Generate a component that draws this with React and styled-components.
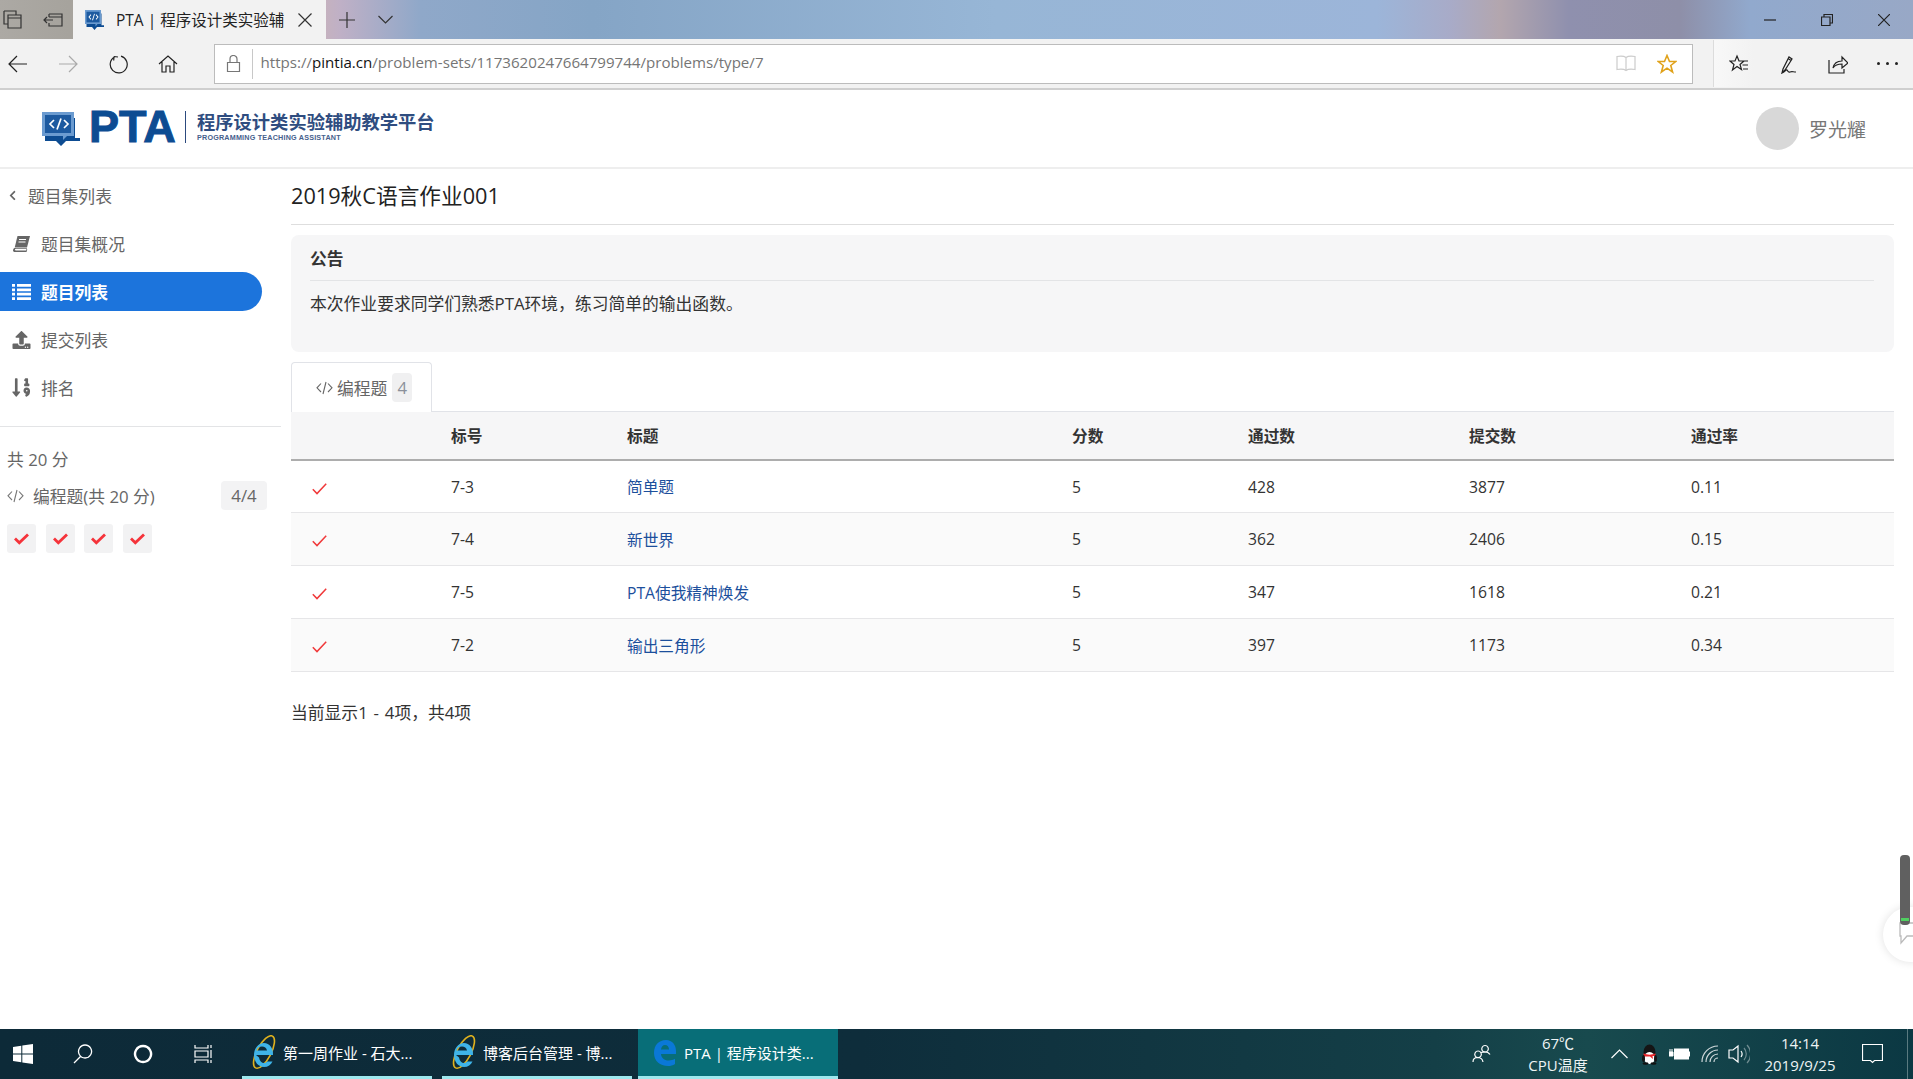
import React from "react"
import styled, { createGlobalStyle } from "styled-components"
import { FaUpload, FaSortNumericDown, FaChevronLeft } from "react-icons/fa"

const GlobalStyle = createGlobalStyle`
    html, body {
        margin: 0;
        padding: 0;
        height: 100%;
        overflow: hidden;
        background: #fff;
    }
    body {
        font-family: "Open Sans", "Noto Sans CJK SC", sans-serif;
        color: #333;
    }
    * { box-sizing: border-box; }
`

const problems = [
    { id: "7-3", title: "简单题", score: 5, pass: 428, submit: 3877, rate: "0.11" },
    { id: "7-4", title: "新世界", score: 5, pass: 362, submit: 2406, rate: "0.15" },
    { id: "7-5", title: "PTA使我精神焕发", score: 5, pass: 347, submit: 1618, rate: "0.21" },
    { id: "7-2", title: "输出三角形", score: 5, pass: 397, submit: 1173, rate: "0.34" },
]

const CodeIcon = ({ size = 17, color = "#666" }) => (
    <svg width={size} height={size} viewBox="0 0 17 17" fill="none" stroke={color} strokeWidth="1.1">
        <path d="M5 4.5 1 8.8l4 4.2M12 4.5l4 4.3-4 4.2M10 3 7 15" />
    </svg>
)

const ThinCheck = () => (
    <svg width="15" height="12" viewBox="0 0 15 12" fill="none" stroke="#f0393a" strokeWidth="1.5">
        <path d="M.8 6.2 5 10.6 14.2.8" />
    </svg>
)

const BoldCheck = () => (
    <svg width="15" height="12" viewBox="0 0 15 12" fill="none" stroke="#f5333a" strokeWidth="2.8">
        <path d="M1 5.6 5.3 9.8 14 1.4" />
    </svg>
)

const BookIcon = () => (
    <svg width="18" height="18" viewBox="0 0 18 18" fill="#666">
        <path d="M5 1h12.500L14.500 12.500H2.200z" />
        <path d="M1.800 13c-1.800 1.500-1.800 4 .7 4H14l.8-2.500-.8-.7-.3 1.700H3.500c-1.400 0-1.400-1.700 0-1.700h10.800l.2-.8H2.500z" />
        <path d="M6.500 4.500h7M6 7h7" stroke="#fff" strokeWidth="1" />
    </svg>
)

const ListIcon = () => (
    <svg width="19" height="16" viewBox="0 0 19 16" fill="#fff">
        <path d="M0 0h3v2.800H0zM5 0h14v2.800H5zM0 4.400h3v2.800H0zM5 4.400h14v2.800H5zM0 8.800h3v2.800H0zM5 8.800h14v2.800H5zM0 13.200h3V16H0zM5 13.200h14V16H5z" />
    </svg>
)

const PtaMark = ({ width = 38, height = 34 }) => (
    <svg width={width} height={height} viewBox="0 0 38 34" preserveAspectRatio="none">
        <path d="M3 6h30v20h5v3H24l-5 5-5-5H3z" fill="#0d4c92" />
        <path d="M0 0h32v24h-7l-4 4v-4H0z" fill="#6b9bd0" />
        <rect x="3" y="3" width="26" height="18" fill="#1d5aa0" />
        <path d="M12 8l-4 4 4 4M22 8l4 4-4 4M19 6.500l-4 11" stroke="#fff" strokeWidth="1.700" fill="none" />
    </svg>
)

const IeLogo = () => (
    <svg width="28" height="36" viewBox="0 0 28 36">
        <ellipse cx="14" cy="17" rx="7" ry="18" transform="rotate(28 14 17)" fill="none" stroke="#e0b21e" strokeWidth="1.6" />
        <path d="M6 20h17c.5-7-3.500-12-9-12S4 13 4 20s4.500 12 10 12c4 0 7-2 8.500-5.500h-5.500c-.8 1-1.800 1.500-3 1.500-2.500 0-4.500-2-5-5.500zm.5-4.500c.5-2.500 3-4 5.500-4s4.500 1.500 5 4z" fill="#3fb4e8" fillRule="evenodd" />
    </svg>
)

const EdgeLogo = () => (
    <svg width="24" height="28" viewBox="0 0 24 28">
        <path d="M1 14C1 6 6 1 13 1c6.500 0 10 5 10 11v3H8c.3 4 3.500 6.500 7.500 6.500 2.500 0 5-.7 6.500-1.700v5.200C20 26.500 17.500 27 15 27 7 27 1 22 1 14zm7-3.500h8c0-2.500-1.500-4.500-4-4.500-2.200 0-3.700 1.800-4 4.500z" fill="#0a78d7" fillRule="evenodd" />
    </svg>
)

const QqIcon = () => (
    <svg width="17" height="21" viewBox="0 0 17 21">
        <ellipse cx="8.500" cy="8" rx="6" ry="7.500" fill="#151515" />
        <ellipse cx="8.500" cy="14" rx="5.500" ry="6" fill="#fff" />
        <path d="M2.500 9.500c3.500 1.500 8.500 1.500 12 0v2.500h-3l.5 3-3-2.500H2.500z" fill="#e8262a" />
        <ellipse cx="2.500" cy="14.500" rx="1.500" ry="3.500" fill="#151515" />
        <ellipse cx="14.500" cy="14.500" rx="1.500" ry="3.500" fill="#151515" />
        <ellipse cx="4.500" cy="19.500" rx="3" ry="1.300" fill="#111" />
        <ellipse cx="12.500" cy="19.500" rx="3" ry="1.300" fill="#111" />
    </svg>
)

const Line = ({ d, size = 20, color = "#222", width = 1.2, vb = 20 }) => (
    <svg width={size} height={size} viewBox={`0 0 ${vb} ${vb}`} fill="none" stroke={color} strokeWidth={width}>
        <path d={d} />
    </svg>
)

const App = () => {
    return (
        <Screen>
            <GlobalStyle />
            <TitleBar>
                <WindowTools>
                    <ChromeSlot><Line d="M1 1h12v4M1 1v13h4M5 5h13v13H5zM5 8h13" color="#333" /></ChromeSlot>
                    <ChromeSlot><Line d="M6 4h13v12H6v-3M6 4v3M10 10H1m3-3-3 3 3 3M6 7h13" color="#333" /></ChromeSlot>
                </WindowTools>
                <ActiveTab>
                    <PtaMark width={19} height={20} />
                    <TabTitle>PTA | 程序设计类实验辅</TabTitle>
                    <Line size={14} vb={14} d="M.5.500l13 13M13.500.500l-13 13" color="#333" />
                </ActiveTab>
                <NewTab><Line size={16} vb={16} d="M8 0v16M0 8h16" color="#333" /></NewTab>
                <ChevronTab><Line size={15} vb={15} d="M.5 4 7.500 11 14.500 4" color="#333" /></ChevronTab>
                <WindowControls>
                    <ControlSlot><Line size={12} vb={12} d="M0 6h12" /></ControlSlot>
                    <ControlSlot><Line size={12} vb={12} d="M.5 3h8.500v8.500H.5zM3 3V.5h8.500V9H9" /></ControlSlot>
                    <ControlSlot><Line size={12} vb={12} d="M0 0l12 12M12 0 0 12" /></ControlSlot>
                </WindowControls>
            </TitleBar>

            <AddressRow>
                <NavGroup>
                    <NavSlot><Line d="M19 10H1m8-8-8 8 8 8" /></NavSlot>
                    <NavSlot><Line d="M1 10h18m-8-8 8 8-8 8" color="#aaa" /></NavSlot>
                    <NavSlot><Line d="M6 2.500l-.3 4M6 2.500l4 .500M6.500 3A8.500 8.500 0 1 0 13 2.200" /></NavSlot>
                    <NavSlot><Line d="M1 10l9-8 9 8M4 8v10h4v-6h4v6h4V8" /></NavSlot>
                </NavGroup>
                <AddressBox>
                    <LockSlot><Line size={17} vb={17} d="M2.500 7.500h12v9h-12zM5 7.500V4a3.500 3.500 0 0 1 7 0v3.500" color="#777" /></LockSlot>
                    <Url>https://<b>pintia.cn</b>/problem-sets/1173620247664799744/problems/type/7</Url>
                    <BookSlot><Line d="M10 3.500C8 2 4 2 1 2.500v13c3-.5 7-.5 9 1 2-1.500 6-1.500 9-1v-13C16 2 12 2 10 3.500zm0 0v13" color="#ccc" /></BookSlot>
                    <StarSlot>
                        <svg width="20" height="20" viewBox="0 0 20 20" fill="none" stroke="#e0a21b" strokeWidth="1.600">
                            <path d="M10 1.500l2.500 6h6.300l-5 4 1.800 6.500-5.600-3.800L4.400 18l1.800-6.500-5-4h6.300z" />
                        </svg>
                    </StarSlot>
                </AddressBox>
                <HubPanel>
                    <HubSlot><Line d="M8 2l2 5h5l-4 3.500 1.500 5L8 12.500 3.500 16 5 10.500 1 7h5zM13 7h6M13.500 11H19M14 15h5" /></HubSlot>
                    <HubSlot><Line d="M5 15 4 19l3-3 7-11-3-2zM10 4.500l3 2M4 19c3-1 4-4 5-3s1 3 3 2 3 0 6 0" /></HubSlot>
                    <HubSlot><Line d="M1 6v13h15v-4M5 14c1-5 5-7 9-7V3l6 6-6 5v-4c-4 0-7 1-9 4z" /></HubSlot>
                    <HubSlot>
                        <Dots><i /><i /><i /></Dots>
                    </HubSlot>
                </HubPanel>
            </AddressRow>

            <SiteHeader>
                <Logo>
                    <PtaMark />
                    <LogoWord>PTA</LogoWord>
                    <LogoRule />
                    <LogoCopy>
                        <LogoName>程序设计类实验辅助教学平台</LogoName>
                        <LogoSub>PROGRAMMING TEACHING ASSISTANT</LogoSub>
                    </LogoCopy>
                </Logo>
                <UserBox>
                    <Avatar />
                    <UserName>罗光耀</UserName>
                </UserBox>
            </SiteHeader>

            <Workspace>
                <Sidebar>
                    <BackLink><FaChevronLeft size={11} />题目集列表</BackLink>
                    <SideNav>
                        <SideItem><BookIcon />题目集概况</SideItem>
                        <SideItem $active><ListIcon />题目列表</SideItem>
                        <SideItem><FaUpload size={18} />提交列表</SideItem>
                        <SideItem><FaSortNumericDown size={21} />排名</SideItem>
                    </SideNav>
                    <ScoreBox>
                        <ScoreTotal>共 20 分</ScoreTotal>
                        <ScoreRow>
                            <CodeIcon color="#777" />
                            <ScoreLabel>编程题(共 20 分)</ScoreLabel>
                            <ScoreBadge>4/4</ScoreBadge>
                        </ScoreRow>
                        <TileRow>
                            {problems.map((p) => <Tile key={p.id}><BoldCheck /></Tile>)}
                        </TileRow>
                    </ScoreBox>
                </Sidebar>

                <Main>
                    <PageTitle>2019秋C语言作业001</PageTitle>
                    <Notice>
                        <NoticeHead>公告</NoticeHead>
                        <NoticeBody>本次作业要求同学们熟悉PTA环境，练习简单的输出函数。</NoticeBody>
                    </Notice>
                    <TabStrip>
                        <TypeTab>
                            <CodeIcon color="#666" />
                            编程题
                            <TabCount>4</TabCount>
                        </TypeTab>
                    </TabStrip>
                    <HeadRow>
                        <span />
                        <span>标号</span>
                        <span>标题</span>
                        <span>分数</span>
                        <span>通过数</span>
                        <span>提交数</span>
                        <span>通过率</span>
                    </HeadRow>
                    <ProblemList>
                        {problems.map((p) => (
                            <ProblemRow key={p.id}>
                                <CheckCell><ThinCheck /></CheckCell>
                                <span>{p.id}</span>
                                <ProblemLink>{p.title}</ProblemLink>
                                <span>{p.score}</span>
                                <span>{p.pass}</span>
                                <span>{p.submit}</span>
                                <span>{p.rate}</span>
                            </ProblemRow>
                        ))}
                    </ProblemList>
                    <Summary>当前显示1 - 4项，共4项</Summary>
                </Main>
            </Workspace>

            <Taskbar>
                <StartGroup>
                    <TaskSlot>
                        <svg width="20" height="20" viewBox="0 0 20 20" fill="#fff">
                            <path d="M0 3l8.300-1.200v7.700H0zM9.300 1.600 20 0v9.500H9.300zM0 10.500h8.300v7.700L0 17zM9.300 10.500H20V20L9.300 18.400z" />
                        </svg>
                    </TaskSlot>
                    <TaskSlot><Line d="M12 1a6.500 6.500 0 1 0 .1 0zM8 12 1 19" color="#fff" width={1.300} /></TaskSlot>
                    <TaskSlot><Line d="M10 2a8 8 0 1 0 .1 0z" color="#fff" width={2.400} /></TaskSlot>
                    <TaskSlot><Line d="M2 1v3h13V1M2 19v-3h13v3M2 7h13v6H2zM18 1v3M18 6v8M18 16v3" color="#fff" /></TaskSlot>
                </StartGroup>
                <TaskButton><IeLogo /><TaskText>第一周作业 - 石大...</TaskText></TaskButton>
                <TaskButton><IeLogo /><TaskText>博客后台管理 - 博...</TaskText></TaskButton>
                <TaskButton $active><EdgeLogo /><TaskText>PTA | 程序设计类...</TaskText></TaskButton>
                <Tray>
                    <TraySlot $w={56}>
                        <Line d="M13 1.500a3.300 3.300 0 1 0 .1 0zM9 8.500c3-1 7-1 9 2M6 7a3.300 3.300 0 1 0 .1 0zM1 18c0-6 9-6 10 0" color="#fff" />
                    </TraySlot>
                    <TrayText $w={96}>
                        <span>67℃</span>
                        <span>CPU温度</span>
                    </TrayText>
                    <TraySlot $w={26}><Line size={17} vb={17} d="M.5 12 8.500 4l8 8" color="#fff" /></TraySlot>
                    <TraySlot $w={34}><QqIcon /></TraySlot>
                    <TraySlot $w={26}>
                        <svg width="21" height="12" viewBox="0 0 21 12">
                            <rect x="5.500" y="1" width="14" height="10" fill="#fff" stroke="#fff" />
                            <path d="M20 4h1v4h-1zM0 4h4v4H0zM1 1v3M3 1v3" stroke="#fff" fill="#fff" strokeWidth="1" />
                        </svg>
                    </TraySlot>
                    <TraySlot $w={36}><Line size={18} vb={18} d="M1 17a16 16 0 0 1 16-16M5 17a12 12 0 0 1 12-12M9 17a8 8 0 0 1 8-8M13 17a4 4 0 0 1 4-4" color="#cfd8da" /></TraySlot>
                    <TraySlot $w={22}>
                        <svg width="22" height="22" viewBox="0 0 22 22" fill="none" stroke="#fff" strokeWidth="1.200">
                            <path d="M1 7h4l5-4v16l-5-4H1zM13 8a5 5 0 0 1 0 6" />
                            <path d="M16 5a9 9 0 0 1 0 12M19 2a13 13 0 0 1 0 18" stroke="#6f8c90" />
                        </svg>
                    </TraySlot>
                    <TrayText $w={100}>
                        <span>14:14</span>
                        <span>2019/9/25</span>
                    </TrayText>
                    <TraySlot $w={44}><Line size={21} vb={21} d="M.5.500h20v16h-8l-2 2-2-2h-8z" color="#fff" /></TraySlot>
                    <ShowDesktop />
                </Tray>
            </Taskbar>

            <FloatDock>
                <Gauge><GaugeLevel /></Gauge>
                <ChatBubble>
                    <svg width="16" height="24" viewBox="0 0 16 24" fill="#fff" stroke="#bbb" strokeWidth="1.300">
                        <path d="M1 1h15v13H8l-6 7v-7H1z" />
                    </svg>
                </ChatBubble>
            </FloatDock>
        </Screen>
    )
}

const Screen = styled.div`
    position: relative;
    display: flex;
    flex-direction: column;
    width: 100%;
    height: 100vh;
    overflow: hidden;
`

const TitleBar = styled.div`
    display: flex;
    align-items: center;
    flex: 0 0 39px;
    background: linear-gradient(90deg, #aca9a4 0, #a6a39d 3.6%, #dcb9a5 14%, #bfb0c6 17.8%, #8fa8c9 22%, #85a5c6 31%, #97b6d6 52%, #9cb5d9 72%, #a8abc8 75.8%, #b3a6ae 78.400%, #8f90ae 82%, #8e8fa8 87.800%, #91a9cd 91.500%, #98a8c6 100%);
`

const WindowTools = styled.div`
    display: flex;
    margin-left: -7px;
    flex: 0 0 80px;
`

const ChromeSlot = styled.div`
    display: flex;
    align-items: center;
    justify-content: center;
    width: 40px;
`

const ActiveTab = styled.div`
    display: flex;
    align-items: center;
    width: 253px;
    height: 39px;
    padding: 0 14px 0 12px;
    background: #f2f2f2;
`

const TabTitle = styled.span`
    flex: 1;
    margin-left: 12px;
    font-size: 15.500px;
    color: #222;
    white-space: nowrap;
`

const NewTab = styled.div`
    display: flex;
    margin-left: 13px;
`

const ChevronTab = styled.div`
    display: flex;
    margin-left: 23px;
`

const WindowControls = styled.div`
    display: flex;
    gap: 45px;
    margin-left: auto;
    padding-right: 23px;
`

const ControlSlot = styled.div`
    display: flex;
`

const AddressRow = styled.div`
    display: flex;
    align-items: center;
    flex: 0 0 51px;
    background: #f2f2f2;
    border-bottom: 2px solid #cfcfcf;
`

const NavGroup = styled.div`
    display: flex;
    flex: 0 0 221px;
    margin-left: -7.500px;
`

const NavSlot = styled.div`
    display: flex;
    align-items: center;
    justify-content: center;
    width: 50px;
`

const AddressBox = styled.div`
    display: flex;
    align-items: center;
    flex: 0 0 1479.500px;
    height: 40px;
    background: #fff;
    border: 1px solid #bcbcbc;
`

const LockSlot = styled.div`
    display: flex;
    align-items: center;
    justify-content: center;
    width: 38px;
    height: 30px;
    border-right: 1px solid #c8c8c8;
`

const Url = styled.div`
    flex: 1;
    margin-left: 8px;
    padding-bottom: 4px;
    font-size: 15.100px;
    color: #757575;
    white-space: nowrap;
    b {
        font-weight: 400;
        color: #111;
    }
`

const BookSlot = styled.div`
    display: flex;
    margin-right: 21px;
`

const StarSlot = styled.div`
    display: flex;
    margin-right: 15px;
`

const HubPanel = styled.div`
    display: flex;
    align-items: center;
    height: 47px;
    margin-left: 20px;
    border-left: 1px solid #dcdcdc;
    background: linear-gradient(90deg, #f8f8f8, #f2f2f2 40px);
    flex: 1;
`

const HubSlot = styled.div`
    display: flex;
    justify-content: center;
    width: 49.500px;
`

const Dots = styled.div`
    display: flex;
    gap: 6px;
    i {
        width: 3px;
        height: 3px;
        background: #222;
        border-radius: 50%;
    }
`

const SiteHeader = styled.div`
    display: flex;
    align-items: center;
    justify-content: space-between;
    flex: 0 0 79px;
    padding: 0 47px 0 42px;
    background: #fff;
    border-bottom: 2px solid #eeeeee;
`

const Logo = styled.div`
    display: flex;
    align-items: center;
`

const LogoWord = styled.div`
    width: 86px;
    margin: 0 0 3px 9px;
    font-family: "Liberation Sans", sans-serif;
    font-size: 45px;
    line-height: 40px;
    font-weight: 700;
    white-space: nowrap;
    color: #0d4c92;
    -webkit-text-stroke: 1px #0d4c92;
`

const LogoRule = styled.div`
    width: 1px;
    height: 32px;
    margin: 0 0 3px 10px;
    background: #2c4a7e;
`

const LogoCopy = styled.div`
    display: flex;
    flex-direction: column;
    margin-left: 11px;
    padding-bottom: 5px;
`

const LogoName = styled.div`
    font-family: "Noto Sans CJK SC", sans-serif;
    font-size: 18.300px;
    line-height: 20px;
    font-weight: 700;
    white-space: nowrap;
    color: #2f4d80;
`

const LogoSub = styled.div`
    margin-top: 3px;
    font-family: "Liberation Sans", sans-serif;
    font-size: 7.200px;
    line-height: 8px;
    font-weight: 700;
    letter-spacing: 0.200px;
    color: #46608c;
`

const UserBox = styled.div`
    display: flex;
    align-items: center;
    gap: 10px;
`

const Avatar = styled.div`
    width: 43px;
    height: 43px;
    border-radius: 50%;
    background: #d8d8d8;
`

const UserName = styled.div`
    font-size: 19px;
    color: #777;
`

const Workspace = styled.div`
    display: flex;
    flex: 1;
    min-height: 0;
`

const Sidebar = styled.div`
    flex: 0 0 281px;
    color: #666;
    font-size: 16.800px;
`

const BackLink = styled.div`
    display: flex;
    align-items: center;
    gap: 10px;
    height: 53px;
    margin-bottom: 2px;
    padding-left: 7px;
`

const SideNav = styled.div`
    display: flex;
    flex-direction: column;
    gap: 9px;
    padding-bottom: 19px;
    border-bottom: 1px solid #e3e4e6;
`

const SideItem = styled.div`
    display: flex;
    align-items: center;
    gap: 10px;
    width: 262px;
    height: 39px;
    padding-left: 12px;
    border-radius: 0 20px 20px 0;
    font-weight: ${(p) => (p.$active ? 700 : 400)};
    color: ${(p) => (p.$active ? "#fff" : "#666")};
    background: ${(p) => (p.$active ? "#1c74dc" : "transparent")};
    svg { flex: 0 0 19px; }
`

const ScoreBox = styled.div`
    padding: 21px 14px 0 7px;
`

const ScoreTotal = styled.div`
    height: 24px;
    line-height: 24px;
`

const ScoreRow = styled.div`
    display: flex;
    align-items: center;
    height: 29px;
    margin-top: 9px;
`

const ScoreLabel = styled.span`
    flex: 1;
    margin-left: 9px;
`

const ScoreBadge = styled.span`
    width: 46px;
    height: 29px;
    line-height: 29px;
    text-align: center;
    border-radius: 4px;
    background: #f3f3f4;
`

const TileRow = styled.div`
    display: flex;
    gap: 9.500px;
    margin-top: 14px;
`

const Tile = styled.div`
    display: flex;
    align-items: center;
    justify-content: center;
    width: 29px;
    height: 29px;
    border-radius: 3px;
    background: #f2f2f3;
`

const Main = styled.div`
    flex: 1;
    min-width: 0;
    padding: 0 19px 0 10px;
`

const PageTitle = styled.div`
    display: flex;
    align-items: center;
    height: 56px;
    padding-bottom: 4px;
    font-size: 21.700px;
    color: #222;
    border-bottom: 1px solid #dedede;
`

const Notice = styled.div`
    height: 117px;
    margin-top: 10px;
    padding: 0 20px 0 19px;
    background: #f6f6f7;
    border-radius: 8px;
    font-size: 16.800px;
`

const NoticeHead = styled.div`
    display: flex;
    align-items: center;
    height: 46px;
    padding-top: 1px;
    font-weight: 700;
    border-bottom: 1px solid #e3e4e6;
`

const NoticeBody = styled.div`
    height: 46px;
    line-height: 46px;
    color: #333;
`

const TabStrip = styled.div`
    display: flex;
    height: 50px;
    margin-top: 10px;
    border-bottom: 1px solid #e1e3e8;
`

const TypeTab = styled.div`
    display: flex;
    align-items: center;
    gap: 4px;
    width: 141px;
    height: 50px;
    padding-left: 24px;
    font-size: 16.800px;
    color: #666;
    background: #fff;
    border: 1px solid #e1e3e8;
    border-bottom: 0;
    border-radius: 4px 4px 0 0;
`

const TabCount = styled.span`
    width: 20px;
    height: 29px;
    margin-left: 1px;
    line-height: 29px;
    text-align: center;
    color: #8b909a;
    background: #f0f0f1;
    border-radius: 4px;
`

const columns = "160px 176px 445px 176px 221px 222px 1fr"

const HeadRow = styled.div`
    display: grid;
    grid-template-columns: ${columns};
    align-items: center;
    height: 49px;
    font-size: 15.700px;
    font-weight: 700;
    background: #f6f6f7;
    border-bottom: 2px solid #adadad;
`

const ProblemList = styled.div`
    display: flex;
    flex-direction: column;
`

const ProblemRow = styled.div`
    display: grid;
    grid-template-columns: ${columns};
    align-items: center;
    height: 53px;
    font-size: 15.700px;
    border-bottom: 1px solid #e6e6e8;
    &:first-child { height: 52px; }
    &:nth-child(even) { background: #fafafa; }
`

const CheckCell = styled.span`
    display: flex;
    padding: 4px 0 0 21px;
`

const ProblemLink = styled.span`
    color: #1c4f9c;
`

const Summary = styled.div`
    margin-top: 29px;
    font-size: 16.800px;
    line-height: 24px;
    word-spacing: 1.500px;
    color: #333;
`

const Taskbar = styled.div`
    display: flex;
    flex: 0 0 50px;
    background: linear-gradient(90deg, #0d2a38 0, #0e2d3b 45%, #143f47 75%, #184a4e 83%, #0b3843 100%);
`

const StartGroup = styled.div`
    display: flex;
    flex: 0 0 242px;
`

const TaskSlot = styled.div`
    display: flex;
    align-items: center;
    justify-content: center;
    width: 60px;
    margin-left: -7px;
    margin-right: 7px;
`

const TaskButton = styled.div`
    display: flex;
    align-items: center;
    gap: 5px;
    width: ${(p) => (p.$active ? 200 : 190)}px;
    margin-right: ${(p) => (p.$active ? 0 : 10)}px;
    margin-left: ${(p) => (p.$active ? -4 : 0)}px;
    padding-left: ${(p) => (p.$active ? 15 : 8)}px;
    background: ${(p) => (p.$active ? "#086e78" : "transparent")};
    border-bottom: 3px solid #9ee8ee;
    svg { margin-right: ${(p) => (p.$active ? 2 : 0)}px; }
`

const TaskText = styled.span`
    font-size: 15px;
    color: #fff;
    white-space: nowrap;
`

const Tray = styled.div`
    display: flex;
    align-items: center;
    align-self: stretch;
    margin-left: auto;
`

const TraySlot = styled.div`
    display: flex;
    align-items: center;
    justify-content: center;
    width: ${(p) => p.$w}px;
`

const TrayText = styled.div`
    display: flex;
    flex-direction: column;
    align-items: center;
    width: ${(p) => p.$w}px;
    font-size: 15px;
    line-height: 22px;
    color: #eef4f4;
    white-space: nowrap;
`

const ShowDesktop = styled.div`
    align-self: stretch;
    width: 6px;
    margin-left: 13px;
    border-left: 1px solid #5a7a80;
`

const FloatDock = styled.div`
    position: absolute;
    top: 855px;
    right: 0;
    width: 30px;
    height: 110px;
`

const Gauge = styled.div`
    position: absolute;
    top: 0;
    right: 3px;
    width: 10px;
    height: 70px;
    background: #606060;
    border-radius: 4px;
    z-index: 2;
`

const GaugeLevel = styled.div`
    position: absolute;
    left: 1px;
    right: 1px;
    bottom: 4px;
    height: 3px;
    background: #4fd060;
`

const ChatBubble = styled.div`
    position: absolute;
    top: 52px;
    left: 0;
    width: 55px;
    height: 55px;
    padding: 15px 0 0 16px;
    border-radius: 50%;
    background: #fff;
    box-shadow: 0 0 10px rgba(0, 0, 0, 0.120);
`

export default App
